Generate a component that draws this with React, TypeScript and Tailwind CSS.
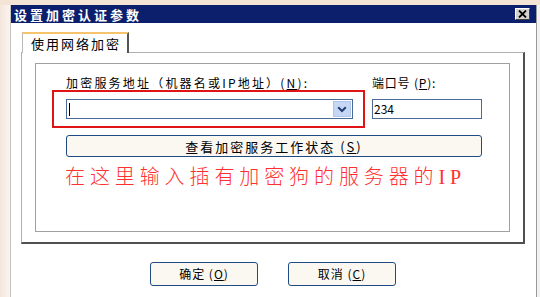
import React from "react";

const cjk = { fontFamily: '"Noto Sans CJK SC", "Liberation Sans", sans-serif' };

function U({ c }: { c: string }) {
  return <span className="underline underline-offset-1">{c}</span>;
}

export default function App() {
  return (
    <div className="w-[540px] h-[297px] overflow-hidden flex flex-col bg-[#f6ebe2]" style={cjk}>
      <div className="h-[5px] bg-[#f4e4d6]" />
      <div className="flex flex-1">
        <div className="w-[10px] bg-gradient-to-r from-[#f4e6dc] to-[#faf4ef]" />
        <div className="w-[527px] flex flex-col bg-white border-l border-[#c9c3bd] border-r border-r-[#9a9a9a]">
          <div className="h-[18px] bg-[#0c1f6c] flex items-center justify-between pl-[3px]">
            <span className="text-white font-bold text-[13px] leading-none tracking-[3px]">设置加密认证参数</span>
            <div className="w-[15px] h-[12px] mr-[6px] bg-[#d6d3ce] border border-t-white border-l-white border-r-[#404040] border-b-[#404040] flex items-center justify-center">
              <svg width="9" height="8" viewBox="0 0 9 8">
                <path d="M1 0.5 L8 7.5 M8 0.5 L1 7.5" stroke="#000" strokeWidth="1.8" />
              </svg>
            </div>
          </div>
          <div className="pt-[9px] pl-[10px] w-[514px]">
            <div className="relative z-10 -mb-px ml-px w-[107px] h-[21px] bg-white border-l border-l-[#b8b8b8] border-t-2 border-t-[#f5c46c] border-r-2 border-r-[#555] flex items-center pl-[8px]">
              <span className="text-[13px] leading-none tracking-[2px] text-black">使用网络加密</span>
            </div>
            <div className="h-[192px] border-l border-t border-[#b0b0b0] border-r-2 border-b-2 border-r-[#505050] border-b-[#505050] pt-[10px] pl-[13px] pr-[13px]">
              <div className="relative h-[169px] border border-[#a0a0a0] pl-[30px] pt-[12px]">
                <div className="grid grid-cols-[287px_110px] gap-x-[19px]">
                  <div className="text-[12px] leading-[14px] tracking-[2.2px] text-black whitespace-nowrap">
                    加密服务地址（机器名或IP地址）(<U c="N" />):
                  </div>
                  <div className="text-[12px] leading-[14px] tracking-[0.8px] text-black whitespace-nowrap">
                    端口号 (<U c="P" />):
                  </div>
                  <div className="mt-[9px] h-[20px] border border-[#4a6a96] bg-white flex items-center">
                    <div className="flex-1 pl-[1px] flex items-center">
                      <div className="w-px h-[13px] bg-black ml-[1px]" />
                    </div>
                    <div className="w-[18px] h-[16px] mr-px bg-[#c6d6f5] border border-[#b0c4ec] flex items-center justify-center">
                      <svg width="10" height="7" viewBox="0 0 10 7">
                        <path d="M1.2 1.2 L5 5 L8.8 1.2" fill="none" stroke="#233e78" strokeWidth="2" />
                      </svg>
                    </div>
                  </div>
                  <div className="mt-[9px] h-[20px] border border-[#4a6a96] bg-white pl-[1px] text-[12px] leading-[17px] text-black">
                    234
                  </div>
                  <div className="col-span-2 mt-[16px] h-[22px] rounded-[3px] border border-[#1f4a82] bg-[#fbf8f2] flex items-center justify-center text-[13px] leading-none tracking-[2px] text-black">
                    查看加密服务工作状态 (<U c="S" />)
                  </div>
                </div>
                <div
                  className="mt-[9px] -ml-[1px] text-[20px] leading-[22px] tracking-[4.9px] text-[#ff3030] whitespace-nowrap"
                  style={{ fontFamily: '"Liberation Serif", "Noto Sans CJK SC", serif', fontWeight: 300 }}
                >
                  在这里输入插有加密狗的服务器的IP
                </div>
                <div className="absolute left-[16px] top-[26px] w-[313px] h-[38px] border-2 border-[#e01414]" />
              </div>
            </div>
            <div className="mt-[18px] flex justify-center gap-[30px]">
              <div className="w-[108px] h-[24px] rounded-[3px] border border-[#1f4a82] bg-[#fbf8f2] flex items-center justify-center text-[12px] leading-none tracking-[1px] text-black">
                确定 (<U c="O" />)
              </div>
              <div className="w-[108px] h-[24px] rounded-[3px] border border-[#1f4a82] bg-[#fbf8f2] flex items-center justify-center text-[12px] leading-none tracking-[1px] text-black">
                取消 (<U c="C" />)
              </div>
            </div>
          </div>
        </div>
        <div className="flex-1 bg-[#f2f2f2]" />
      </div>
    </div>
  );
}
